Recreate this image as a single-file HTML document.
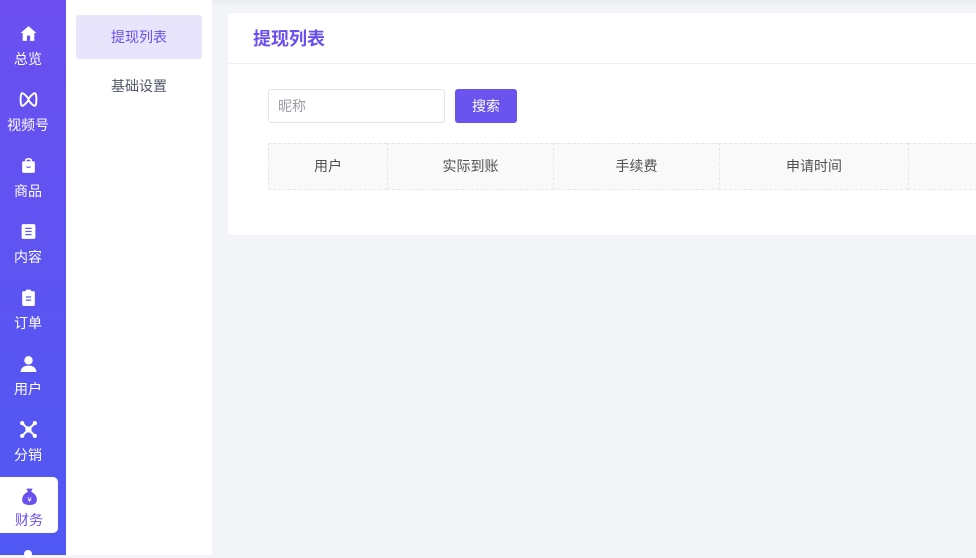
<!DOCTYPE html>
<html><head><meta charset="utf-8">
<style>
*{margin:0;padding:0;box-sizing:border-box}
body{width:976px;height:555px;overflow:hidden;background:#f3f4f8;font-family:"Liberation Sans","Noto Sans CJK SC",sans-serif;position:relative}
.side{position:absolute;left:0;top:0;width:66px;height:555px;background:linear-gradient(180deg,#6c4ff0 0%,#5a55f2 60%,#5058f3 100%)}
.it{position:absolute;left:0;width:58px;height:56px;color:#fff;font-size:14px;text-align:center}
.it svg{display:block;margin:0 auto;width:19px;height:19px}
.it span{display:block;margin-top:8px;line-height:16px}
.act{background:#fff;border-radius:0 5px 5px 0;color:#6a4ff0}
.sub{position:absolute;left:66px;top:0;width:146px;height:555px;background:#fff}
.sub .a{position:absolute;left:10px;top:15px;width:126px;height:44px;background:#e8e4fc;border-radius:3px;color:#6a4ff0;font-size:14px;line-height:44px;text-align:center}
.sub .b{position:absolute;left:10px;top:64px;width:126px;height:44px;color:#505866;font-size:14px;line-height:44px;text-align:center}
.card{position:absolute;left:228px;top:13px;width:760px;height:222px;background:#fff;border-radius:4px}
.title{height:51px;border-bottom:1px solid #eef0f4;padding-left:25px;font-size:18px;font-weight:bold;color:#6a4ff0;line-height:52px}
.inp{position:absolute;left:40px;top:76px;width:177px;height:34px;border:1px solid #e3e5ea;border-radius:3px;font-size:14px;color:#9a9ea6;line-height:32px;padding-left:9px}
.btn{position:absolute;left:227px;top:76px;width:62px;height:34px;background:#6b53f0;border-radius:3px;color:#fff;font-size:14px;line-height:34px;text-align:center}
.th{position:absolute;top:130px;height:47px;background:#f9f9f9;border:1px dashed #e6e6e6;border-right:none;font-size:14px;color:#505050;line-height:45px;text-align:center}
</style></head><body>
<div class="side">
 <div class="it" style="top:24px;width:56px"><svg viewBox="0 0 18 18"><path d="M9 2L1.5 8.5H3.5V16H14.5V8.5H16.5Z" fill="#fff"/><rect x="7.5" y="11" width="3" height="5" fill="#6a4ff0"/></svg><span>总览</span></div>
 <div class="it" style="top:90px;width:56px"><svg viewBox="0 0 18 18"><path d="M3 3C1 3 1 15 3 15C5 15 9 10 9 9C9 8 5 3 3 3ZM15 3C17 3 17 15 15 15C13 15 9 10 9 9C9 8 13 3 15 3Z" fill="none" stroke="#fff" stroke-width="1.8"/></svg><span>视频号</span></div>
 <div class="it" style="top:156px;width:56px"><svg viewBox="0 0 18 18"><rect x="3" y="5" width="12" height="11" rx="1.5" fill="#fff"/><path d="M6.5 5V3.5Q9 1.5 11.5 3.5V5" fill="none" stroke="#fff" stroke-width="1.5"/><path d="M7 10Q9 12 11 10" fill="none" stroke="#6060f0" stroke-width="1"/></svg><span>商品</span></div>
 <div class="it" style="top:222px;width:56px"><svg viewBox="0 0 18 18"><rect x="2.5" y="2" width="13" height="14" rx="1.5" fill="#fff"/><path d="M6 6H12M6 9H12M6 12H12" stroke="#5e58f2" stroke-width="1.2"/></svg><span>内容</span></div>
 <div class="it" style="top:288px;width:56px"><svg viewBox="0 0 18 18"><rect x="3" y="3" width="12" height="14" rx="1.5" fill="#fff"/><rect x="6.5" y="1.5" width="5" height="3" rx="1" fill="#fff"/><path d="M6.5 8.5H11.5M6.5 11.5H11.5" stroke="#5a57f2" stroke-width="1.2"/></svg><span>订单</span></div>
 <div class="it" style="top:354px;width:56px"><svg viewBox="0 0 18 18"><circle cx="9" cy="6" r="4" fill="#fff"/><path d="M1.5 17Q2 11 9 11Q16 11 16.5 17Z" fill="#fff"/></svg><span>用户</span></div>
 <div class="it" style="top:420px;width:56px"><svg viewBox="0 0 18 18"><path d="M3 3L15 15M15 3L3 15" stroke="#fff" stroke-width="2"/><circle cx="9" cy="9" r="3" fill="#fff"/><circle cx="3" cy="3" r="2" fill="#fff"/><circle cx="15" cy="3" r="2" fill="#fff"/><circle cx="3" cy="15" r="2" fill="#fff"/><circle cx="15" cy="15" r="2" fill="#fff"/></svg><span>分销</span></div>
 <div class="it act" style="top:477px;height:56px;padding-top:10px"><svg viewBox="0 0 18 18"><path d="M6 1.5H12L10.5 4.5Q16 7 16 12Q16 17 9 17Q2 17 2 12Q2 7 7.5 4.5Z" fill="#6a4ff0"/><text x="9" y="14" font-size="7" fill="#fff" text-anchor="middle" font-family="Liberation Sans">¥</text></svg><span style="margin-top:6px">财务</span></div>
 <div style="position:absolute;left:24px;top:550px;width:8px;height:8px;border-radius:50%;background:#fff"></div>
</div>
<div class="sub"><div class="a">提现列表</div><div class="b">基础设置</div></div>
<div style="position:absolute;left:212px;top:0;width:764px;height:8px;background:linear-gradient(#ecedf2,#f3f4f8)"></div>
<div class="card">
 <div class="title">提现列表</div>
 <div class="inp">昵称</div>
 <div class="btn">搜索</div>
 <div class="th" style="left:40px;width:119px">用户</div>
 <div class="th" style="left:159px;width:166px">实际到账</div>
 <div class="th" style="left:325px;width:166px">手续费</div>
 <div class="th" style="left:491px;width:189px">申请时间</div>
 <div class="th" style="left:680px;width:100px"></div>
</div>
</body></html>
